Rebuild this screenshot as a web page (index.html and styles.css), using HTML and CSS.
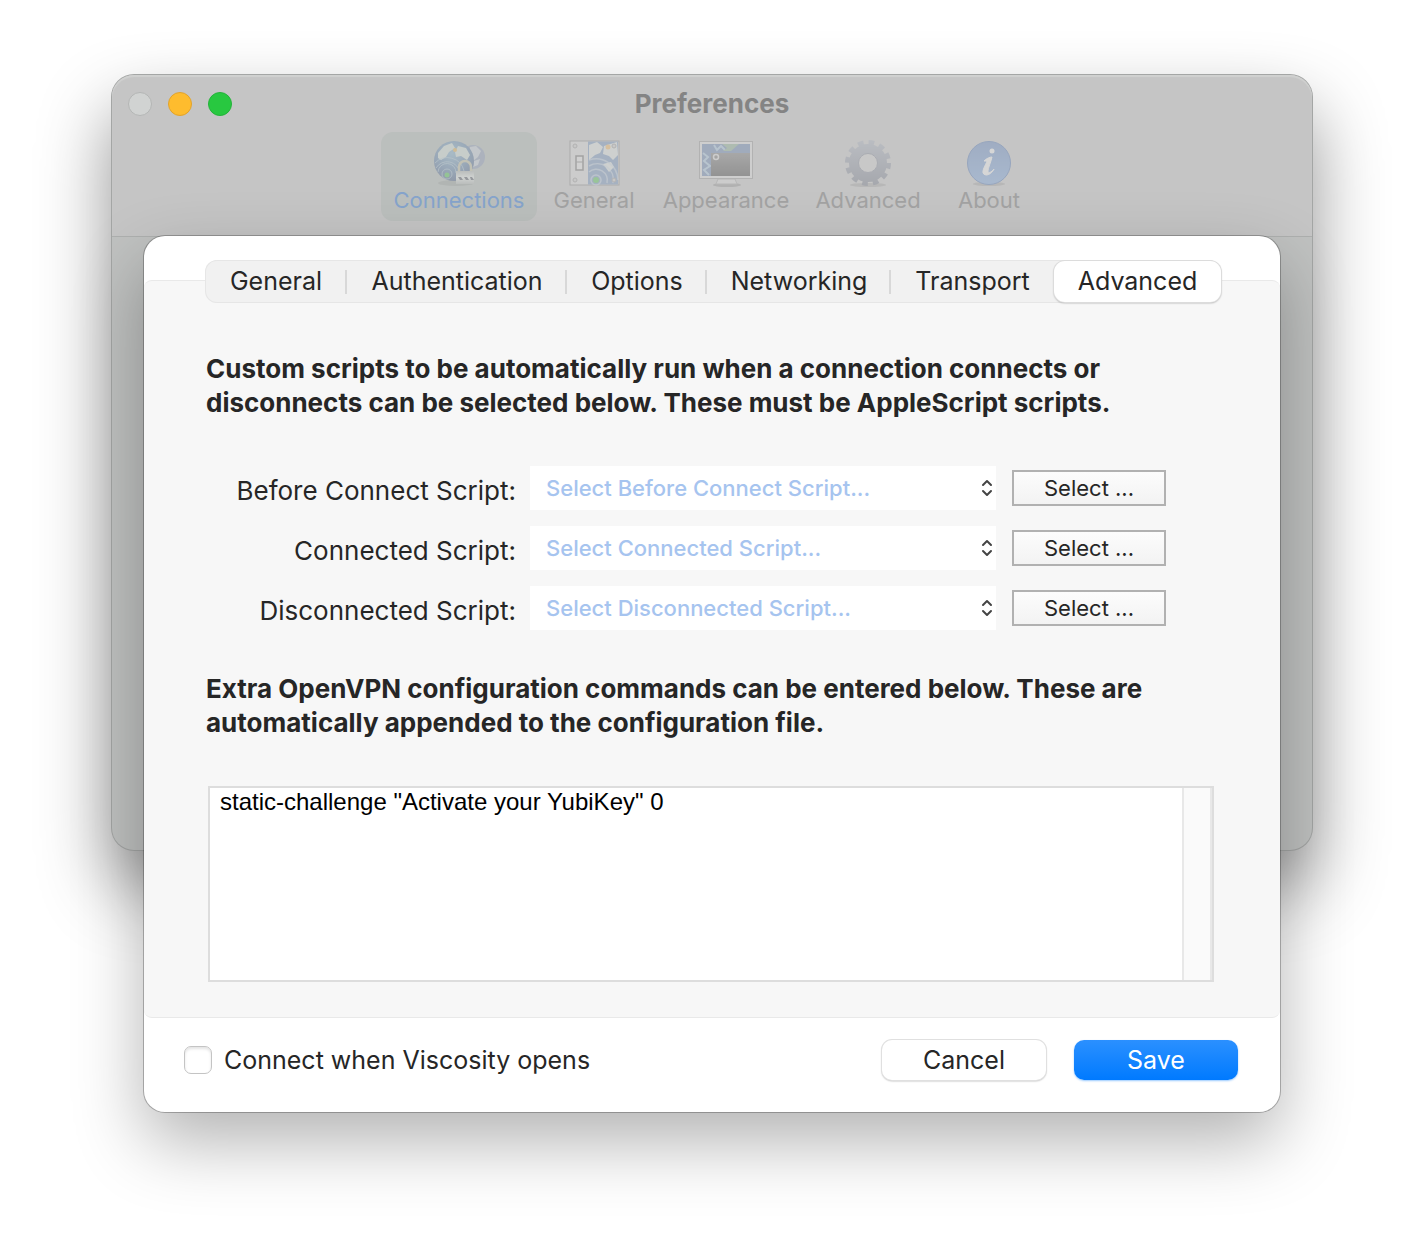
FILE: index.html
```html
<!DOCTYPE html>
<html lang="en">
<head>
<meta charset="utf-8">
<title>Preferences</title>
<link rel="stylesheet" href="styles.css">
</head>
<body>
<main class="desktop">
  <section class="window" aria-label="Preferences">
    <header class="chrome">
      <div class="titlebar">
        <div class="lights">
          <button class="light light-close" type="button" aria-label="Close"></button>
          <button class="light light-min" type="button" aria-label="Minimize"></button>
          <button class="light light-zoom" type="button" aria-label="Zoom"></button>
        </div>
        <h1 class="title">Preferences</h1>
      </div>
      <nav class="toolbar" aria-label="Sections">
        <button class="tool tool-active" type="button">
          <svg class="tool-icon" viewBox="0 0 56 48" aria-hidden="true">
            <defs>
              <radialGradient id="globe" cx=".45" cy=".3" r=".75"><stop offset="0" stop-color="#7fb4dc"/><stop offset=".6" stop-color="#4a70a8"/><stop offset="1" stop-color="#2c3f76"/></radialGradient>
              <linearGradient id="lock" x2="0" y2="1"><stop offset="0" stop-color="#bbb"/><stop offset=".5" stop-color="#fff"/><stop offset="1" stop-color="#bbb"/></linearGradient>
            </defs>
            <ellipse cx="25" cy="44" rx="18" ry="3" fill="#555" opacity=".3"/>
            <circle cx="42" cy="18" r="12" fill="#8b97bd"/>
            <path d="M39 8l6-1 5 5-3 6-5 4-3-6zM43 22l6-2-2 6-5 2z" fill="#d8dceb"/>
            <circle cx="23" cy="22" r="20" fill="url(#globe)"/>
            <path d="M7 14l6-7 8-3 3 5-6 4-3 5-5 3-3-2zM27 7l8 2 4 7-3 5-6-4-5 1-1-5z" fill="#e4eee9"/>
            <g fill="none" stroke="#b7d4ea" opacity=".7"><circle cx="16" cy="35" r="5"/><path d="M7 33a9 9 0 0 1 18 1M5 29a13 13 0 0 1 24 5M4 24a17 17 0 0 1 29 8"/></g>
            <circle cx="16" cy="36" r="2.500" fill="#3ccf3c"/><circle cx="24" cy="11" r="2" fill="#ffb43a"/>
            <path d="M28 32v-4a6 6 0 0 1 12 0v4" fill="none" stroke="#d0c6a4" stroke-width="2.500"/>
            <rect x="25" y="32" width="18" height="13" fill="url(#lock)"/>
            <path d="M27 38h3l2 3h-3zM33 38h3l2 3h-3zM39 38h2l2 3h-3z" fill="#445"/>
          </svg>
          <span>Connections</span>
        </button>
        <button class="tool" type="button">
          <svg class="tool-icon" viewBox="0 0 56 48" aria-hidden="true">
            <rect x="4" y="2" width="49" height="44" fill="#dcdcdc" stroke="#777" stroke-width="1"/>
            <rect x="22" y="2.500" width="30" height="43" fill="#5f86b9"/>
            <path d="M23 6l8-3 6 5-3 6-5 2-6 5zM38 7l13-4 1 13-5 5-4-4-6-2zM37 25l8-2 3 5-5 5z" fill="#e3ece8"/>
            <g fill="none" stroke="#c5d9ec" opacity=".7" stroke-width="1.500"><circle cx="30" cy="41" r="5"/><path d="M23 33a11 11 0 0 1 18 11M23 27a16 16 0 0 1 24 17M23 21a22 22 0 0 1 29 20"/></g>
            <circle cx="30" cy="41" r="3" fill="#35c435"/><circle cx="42" cy="8" r="2.500" fill="#ffb347"/>
            <rect x="10" y="17" width="7" height="14" fill="#eee" stroke="#555" stroke-width="1.500"/><path d="M10 23h7" stroke="#666"/>
            <g fill="#ccc" stroke="#888"><circle cx="9" cy="7" r="2"/><circle cx="9" cy="41" r="2"/><circle cx="48" cy="7" r="2"/><circle cx="48" cy="41" r="2"/></g>
          </svg>
          <span>General</span>
        </button>
        <button class="tool" type="button">
          <svg class="tool-icon" viewBox="0 0 56 48" aria-hidden="true">
            <defs><linearGradient id="shade" x2="0" y2="1"><stop offset="0" stop-color="#666"/><stop offset="1" stop-color="#222"/></linearGradient></defs>
            <ellipse cx="29" cy="46" rx="14" ry="2" fill="#444" opacity=".5"/>
            <path d="M20 40h17l2 5H18z" fill="#ddd" stroke="#999"/>
            <rect x="1.500" y="2.500" width="53" height="37" fill="#e4e4e4" stroke="#888"/>
            <rect x="4" y="5" width="48" height="32" fill="#4e70a8"/>
            <path d="M5 14l5 4-4 4 6 5-6 4 5 5M16 6l3 5 4-4 4 4" fill="none" stroke="#9cc4e4" stroke-width="2"/>
            <path d="M24 5l5 4-4 3h8l8-7z" fill="#7aa886"/>
            <rect x="13" y="14" width="39" height="23" fill="url(#shade)"/>
            <circle cx="18" cy="18" r="2.500" fill="none" stroke="#ddd" stroke-width="1.500"/>
          </svg>
          <span>Appearance</span>
        </button>
        <button class="tool" type="button">
          <svg class="tool-icon" viewBox="0 0 56 48" aria-hidden="true">
            <defs><linearGradient id="steel" gradientUnits="userSpaceOnUse" x1="0" y1="0" x2="0" y2="48"><stop offset="0" stop-color="#a4adbe"/><stop offset="1" stop-color="#5c6376"/></linearGradient></defs>
            <ellipse cx="28" cy="46" rx="18" ry="2" fill="#555" opacity=".4"/>
            <circle cx="28" cy="24" r="20.500" fill="none" stroke="url(#steel)" stroke-width="5" stroke-dasharray="5.600 5.133"/>
            <circle cx="28" cy="24" r="14" fill="none" stroke="url(#steel)" stroke-width="10"/>
            <circle cx="28" cy="24" r="9.500" fill="#d2d2d2" stroke="#6d7488"/>
          </svg>
          <span>Advanced</span>
        </button>
        <button class="tool" type="button">
          <svg class="tool-icon" viewBox="0 0 56 48" aria-hidden="true">
            <defs><linearGradient id="info" x2="0" y2="1"><stop offset="0" stop-color="#4a76bd"/><stop offset="1" stop-color="#699fe6"/></linearGradient></defs>
            <ellipse cx="28" cy="45" rx="16" ry="2" fill="#555" opacity=".4"/>
            <circle cx="28" cy="24" r="21.500" fill="url(#info)" stroke="#2f5fae"/>
            <circle cx="31" cy="12" r="2.500" fill="#fff"/>
            <path d="M23 22c3-3 6-4 8-4-1 5-4 11-4 14 0 3 4 1 6-2-2 4-5 6-8 6-7-1 0-10 1-14z" fill="#fff" stroke="#fff"/>
          </svg>
          <span>About</span>
        </button>
      </nav>
    </header>
  </section>

  <form class="sheet">
    <div class="tabs" role="tablist">
      <button class="tab" type="button" role="tab">General</button>
      <button class="tab" type="button" role="tab">Authentication</button>
      <button class="tab" type="button" role="tab">Options</button>
      <button class="tab" type="button" role="tab">Networking</button>
      <button class="tab tab-last" type="button" role="tab">Transport</button>
      <button class="tab tab-active" type="button" role="tab" aria-selected="true">Advanced</button>
    </div>
    <div class="panel">
      <p class="note">Custom scripts to be automatically run when a connection connects or<br>disconnects can be selected below. These must be AppleScript scripts.</p>
      <div class="scripts">
        <label class="label" for="before">Before Connect Script:</label>
        <div class="picker">
          <select class="select" id="before"><option>Select Before Connect Script...</option></select>
          <svg class="arrows" viewBox="0 0 12 18" aria-hidden="true"><path d="M2 6l4-4 4 4M2 12l4 4 4-4"/></svg>
        </div>
        <button class="choose" type="button">Select ...</button>
        <label class="label" for="connected">Connected Script:</label>
        <div class="picker">
          <select class="select" id="connected"><option>Select Connected Script...</option></select>
          <svg class="arrows" viewBox="0 0 12 18" aria-hidden="true"><path d="M2 6l4-4 4 4M2 12l4 4 4-4"/></svg>
        </div>
        <button class="choose" type="button">Select ...</button>
        <label class="label" for="disconnected">Disconnected Script:</label>
        <div class="picker">
          <select class="select" id="disconnected"><option>Select Disconnected Script...</option></select>
          <svg class="arrows" viewBox="0 0 12 18" aria-hidden="true"><path d="M2 6l4-4 4 4M2 12l4 4 4-4"/></svg>
        </div>
        <button class="choose" type="button">Select ...</button>
      </div>
      <label class="note" for="commands">Extra OpenVPN configuration commands can be entered below. These are<br>automatically appended to the configuration file.</label>
      <div class="editor">
        <textarea class="commands" id="commands" spellcheck="false">static-challenge "Activate your YubiKey" 0</textarea>
        <div class="track"></div>
      </div>
    </div>
    <footer class="footer">
      <label class="autoconnect"><input class="check" type="checkbox">Connect when Viscosity opens</label>
      <button class="action" type="button">Cancel</button>
      <button class="action action-primary" type="submit">Save</button>
    </footer>
  </form>
</main>
</body>
</html>
```
FILE: styles.css
```css
* { box-sizing: border-box; }

body {
  margin: 0;
  background: #fff;
  color: #262626;
  font-family: Inter, "Liberation Sans", sans-serif;
  font-size: 25px;
}

button, select, textarea {
  margin: 0;
  padding: 0;
  border: 0;
  background: none;
  color: inherit;
  font: inherit;
}

/* The sheet shares the window's grid cell and hangs below its toolbar. */
.desktop {
  display: grid;
  padding: 75px 112px 148px;
  overflow: hidden;
}

.window {
  grid-area: 1 / 1;
  margin-bottom: 262px;
  border-radius: 22px;
  background: #c0c2c1;
  box-shadow: 0 0 0 1px #a4a6a5, 0 36px 72px rgba(0, 0, 0, .44);
}

.chrome {
  height: 162px;
  border-bottom: 1px solid #aeb0af;
  border-radius: 22px 22px 0 0;
  background: #c5c5c5;
  box-shadow: inset 0 2px 1px #d0d1d0;
}

.titlebar {
  display: grid;
  grid-template-columns: 1fr auto 1fr;
  align-items: center;
  height: 57px;
  padding: 0 16px;
}

.lights { display: flex; gap: 16px; }

.light {
  width: 24px;
  height: 24px;
  border: 1px solid #b4b6b5;
  border-radius: 50%;
  background: #d1d3d2;
}
.light-min { border-color: #e2a32c; background: #febc2e; }
.light-zoom { border-color: #24b33a; background: #28c840; }

.title {
  margin: 0;
  color: #848484;
  font-size: 26px;
  font-weight: 700;
}

.toolbar {
  display: grid;
  grid-template-columns: 156px 106px 150px 126px 108px;
  justify-content: center;
  gap: 4px;
}

.tool {
  display: flex;
  flex-direction: column;
  align-items: center;
  height: 89px;
  padding-top: 7px;
  border-radius: 12px;
  color: #a3a3a3;
  font-size: 22px;
  line-height: 26px;
}
.tool-active { background: #bbbfbd; color: #86a4cc; }
.tool-icon { width: 56px; height: 48px; opacity: .3; }

.sheet {
  z-index: 1;
  grid-area: 1 / 1;
  margin: 161px 32px 0;
  padding-top: 24px;
  border-radius: 21px;
  background: #fff;
  box-shadow: 0 0 0 1px rgba(0, 0, 0, .25), 0 30px 70px rgba(0, 0, 0, .3);
}

.tabs {
  position: relative;
  display: grid;
  grid-template-columns: 142fr 220fr 140fr 184fr 163fr 167fr;
  height: 43px;
  margin: 0 59px 0 61px;
  border-radius: 12px;
  background: #f1f1f1;
  box-shadow: inset 0 0 0 1px #e6e6e6;
}

.tab {
  display: grid;
  place-items: center;
  padding-bottom: 1px;
  background: linear-gradient(#d8d8d8, #d8d8d8) right center / 2px 24px no-repeat;
}
.tab-last { background: none; }
.tab-active {
  margin: 1px 0;
  border-radius: 11px;
  background: #fff;
  box-shadow: 0 0 0 1px #dcdcdc, 0 1px 2px rgba(0, 0, 0, .4);
}

.panel {
  display: grid;
  margin-top: -23px;
  padding: 71px 62px 35px;
  border: solid #e9e9e9;
  border-width: 1px 0;
  border-radius: 8px;
  background: #f7f7f7;
}

.note {
  margin: 0;
  font-size: 26px;
  font-weight: 700;
  line-height: 34px;
  white-space: nowrap;
}

.scripts {
  display: grid;
  grid-template-columns: 308px 1fr 154px;
  align-items: center;
  gap: 16px;
  margin: 46px 52px 42px 0;
}

.label {
  padding-top: 6px;
  margin-right: -2px;
  font-size: 26px;
  text-align: right;
  line-height: 32px;
}

.picker { position: relative; display: grid; }

.select {
  height: 44px;
  padding: 0 32px 0 16px;
  border-radius: 0;
  background: #fff;
  color: #a6c4ef;
  font-size: 22px;
  font-weight: 500;
  appearance: none;
}

.arrows {
  position: absolute;
  top: 13px;
  right: 3px;
  width: 12px;
  height: 18px;
  fill: none;
  stroke: #444;
  stroke-width: 2;
  stroke-linecap: round;
  stroke-linejoin: round;
  pointer-events: none;
}

.choose {
  height: 36px;
  border: 2px solid #b1b1b1;
  background: linear-gradient(#fcfcfc, #f3f3f3);
  font-size: 22px;
}

.editor {
  display: grid;
  grid-template-columns: 1fr 30px;
  height: 196px;
  margin: 46px 4px 0 2px;
  border: 2px solid #ddd;
  background: #fff;
}

.commands {
  padding: 0 10px;
  outline: 0;
  color: #000;
  font-family: "Liberation Sans", Arial, sans-serif;
  font-size: 24px;
  line-height: 28px;
  resize: none;
}

.track {
  border: solid #e8e8e8;
  border-width: 0 2px;
  background: #fafafa;
}

.footer {
  display: flex;
  align-items: center;
  height: 94px;
  padding: 0 42px 10px 40px;
}

.autoconnect {
  display: flex;
  align-items: center;
  gap: 12px;
  margin-right: auto;
}

.check {
  width: 28px;
  height: 28px;
  margin: 0;
  border: 1px solid #c4c4c4;
  border-radius: 7px;
  background: #fff;
  box-shadow: inset 0 2px 3px #e4e4e4;
  appearance: none;
}

.action {
  width: 164px;
  height: 40px;
  border-radius: 10px;
  background: #fff;
  box-shadow: 0 0 0 1px #e0e0e0, 0 1px 2px rgba(0, 0, 0, .4);
}
.action-primary {
  margin-left: 28px;
  background: linear-gradient(#2b90ff, #007aff);
  box-shadow: 0 1px 2px rgba(0, 122, 255, .4);
  color: #fff;
}
```
